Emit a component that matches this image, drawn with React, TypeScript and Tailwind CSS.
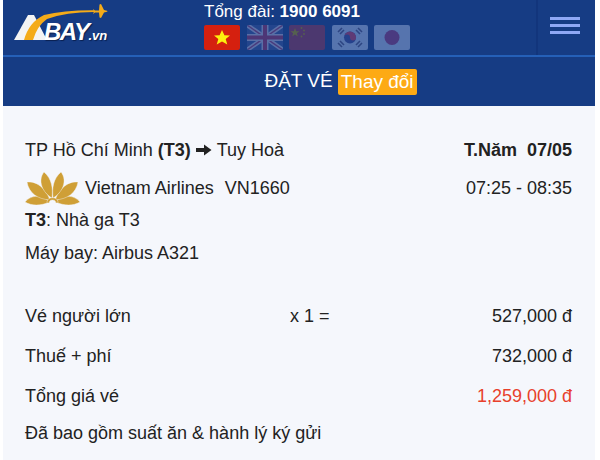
const flagBase = 'h-[25px] w-[36px] overflow-hidden rounded-[2px]';

const VietnamFlag = () => (
  <svg viewBox="0 0 36 25" className={flagBase}>
    <rect width="36" height="25" fill="#d5200f" />
    <polygon points="18,5 20.4,10.3 26,10.4 21.7,14 23.3,19.6 18,16.4 12.7,19.6 14.3,14 10,10.4 15.6,10.3" fill="#fdf00e" />
  </svg>
);

const UkFlag = () => (
  <svg viewBox="0 0 36 25" className={flagBase}>
    <rect width="36" height="25" fill="#23458d" />
    <path d="M0 0L36 25M36 0L0 25" stroke="#5a6fa6" strokeWidth="4.5" />
    <path d="M0 0L36 25M36 0L0 25" stroke="#4a3a7c" strokeWidth="1.4" />
    <path d="M18 0V25M0 12.5H36" stroke="#5a6fa6" strokeWidth="7" />
    <path d="M18 0V25M0 12.5H36" stroke="#4d3676" strokeWidth="4" />
  </svg>
);

const ChinaFlag = () => (
  <svg viewBox="0 0 36 25" className={flagBase}>
    <rect width="36" height="25" fill="#4c386f" />
    <polygon points="6,3 7.2,6.2 10.5,6.2 7.9,8.3 8.8,11.5 6,9.6 3.2,11.5 4.1,8.3 1.5,6.2 4.8,6.2" fill="#55604f" />
    <circle cx="12.5" cy="3" r="0.9" fill="#55604f" />
    <circle cx="15" cy="5.5" r="0.9" fill="#55604f" />
    <circle cx="15" cy="9" r="0.9" fill="#55604f" />
    <circle cx="12.5" cy="11.5" r="0.9" fill="#55604f" />
  </svg>
);

const KoreaFlag = () => (
  <svg viewBox="0 0 36 25" className={flagBase}>
    <rect width="36" height="25" fill="#5674ae" />
    <circle cx="18" cy="12.5" r="6" fill="#25418c" />
    <path d="M12 12.5a6 6 0 0 1 12 0a3 3 0 0 1-6 0a3 3 0 0 0-6 0z" fill="#5f3a75" />
    <path d="M6 7l4-4M8 9l4-4M26 3l4 4M24 5l4 4M6 18l4 4M8 16l4 4M26 22l4-4M24 20l4-4" stroke="#2d4582" strokeWidth="1.6" />
  </svg>
);

const JapanFlag = () => (
  <svg viewBox="0 0 36 25" className={flagBase}>
    <rect width="36" height="25" fill="#5674ae" />
    <circle cx="18" cy="12.5" r="7.5" fill="#4a3a80" />
  </svg>
);

// logo box starts at x=14, y=4 on the page
const Logo = () => (
  <div className="relative h-[40px] w-[96px]">
    <svg viewBox="0 0 96 40" className="absolute inset-0 h-full w-full">
      <polygon points="0,36 14,11 20,11 33,36" fill="#f4f4f4" />
      <path d="M10 36Q15 18 30 11Q50 6 80 6.2L80 8Q52 8 33 15Q23 22 19 36Z" fill="#f4ab19" />
      <path d="M79 5L81 6.5L85 6.5L85.5 0.5L87 0L90 6L93 6.8Q94 7.2 93 7.8L90 8.5L87 14L85.5 13.5L85 8.5L81 8.5L79 10L80 7.5Z" fill="#f4ab19" />
    </svg>
    <div className="absolute top-[15px] left-[30px] flex items-baseline font-['Liberation_Sans',sans-serif] text-white italic [text-shadow:1px_1px_1px_#0a2050]">
      <span className="text-[24px] leading-[26px] font-bold tracking-[-1.5px]">BAY</span>
      <span className="text-[13px] leading-[14px] font-bold">.vn</span>
    </div>
  </div>
);

const LotusLogo = () => (
  <svg viewBox="0 0 55 34" className="h-[34px] w-[55px]">
    <g fill="#cf9f36" stroke="#f5f7fc" strokeWidth="0.4">
      <path d="M0 31C7 23 17 24 25 31C15 35 7 35 0 31Z" />
      <path d="M55 31C48 23 38 24 30 31C40 35 48 35 55 31Z" />
      <path d="M2 11C11 10 20 16 25 29C12 28 4 22 2 11Z" />
      <path d="M53 11C44 10 35 16 30 29C43 28 51 22 53 11Z" />
      <path d="M19 1C27 8 28 17 27 27C18 22 12 10 19 1Z" />
      <path d="M36 1C28 8 27 17 28 27C37 22 43 10 36 1Z" />
      <path d="M22 32C21 25 34 25 33 32L31 32C31 28 24 28 24 32Z" />
    </g>
  </svg>
);

const prices = [
  { label: 'Vé người lớn', middle: 'x 1 =', value: '527,000 đ', valueClass: 'text-[#222222]' },
  { label: 'Thuế + phí', middle: '', value: '732,000 đ', valueClass: 'text-[#222222]' },
  { label: 'Tổng giá vé', middle: '', value: '1,259,000 đ', valueClass: 'text-[#e8402b]' },
];

export default function App() {
  return (
    <div className="h-[460px] w-[600px] overflow-hidden bg-white font-['Liberation_Sans',Arial,sans-serif] text-[18px] text-[#222222]">
      <div className="mr-[5px] ml-[3px] h-[460px] bg-[#f5f7fc]">
        <header className="flex h-[106px] flex-col bg-[#163c84]">
          <div className="flex h-[57px] border-b-2 border-[#2560b8]">
            <div className="w-[201px] pt-[4px] pl-[11px]">
              <Logo />
            </div>
            <div className="flex w-[332px] flex-col items-start">
              <div className="pt-[1px] text-[17px] leading-[22px] text-white">
                Tổng đài: <b>1900 6091</b>
              </div>
              <div className="mt-[2px] flex gap-[6.5px]">
                <VietnamFlag />
                <UkFlag />
                <ChinaFlag />
                <KoreaFlag />
                <JapanFlag />
              </div>
            </div>
            <div className="flex flex-1 flex-col items-center gap-[4px] border-l-2 border-[#12357c] pt-[17px] pr-[3px]">
              <span className="h-[3px] w-[30px] bg-[#8fa8f5]" />
              <span className="h-[3px] w-[30px] bg-[#8fa8f5]" />
              <span className="h-[3px] w-[30px] bg-[#8fa8f5]" />
            </div>
          </div>
          <div className="flex flex-1 items-center justify-center gap-[5px] pl-[83px] text-[19px] text-white">
            <span>ĐẶT VÉ</span>
            <span className="rounded-[2px] bg-[#fdaa14] px-[3px] leading-[26px]">Thay đổi</span>
          </div>
        </header>

        <main className="pr-[23px] pl-[22px]">
          <div className="flex justify-between pt-[32px] leading-[24px]">
            <div className="flex items-center">
              <span>
                TP Hồ Chí Minh <b>(T3)</b>
              </span>
              <svg viewBox="0 0 16 14" className="mx-[5px] h-[14px] w-[16px]">
                <path d="M0 5H8V1.5L15.5 7L8 12.5V9H0Z" fill="#222222" />
              </svg>
              <span>Tuy Hoà</span>
            </div>
            <b>T.Năm&nbsp; 07/05</b>
          </div>
          <div className="mt-[9px] flex items-center justify-between">
            <div className="flex items-center gap-[5px]">
              <LotusLogo />
              <div className="flex gap-[11px]">
                <span>Vietnam Airlines</span>
                <span>VN1660</span>
              </div>
            </div>
            <span>07:25 - 08:35</span>
          </div>
          <div className="mt-[3px] leading-[24px]">
            <b>T3</b>: Nhà ga T3
          </div>
          <div className="mt-[9px] leading-[24px]">Máy bay: Airbus A321</div>

          <div className="mt-[31px] flex flex-col">
            {prices.map((row) => (
              <div key={row.label} className="grid h-[40px] grid-cols-[265px_1fr_auto] items-center">
                <span>{row.label}</span>
                <span>{row.middle}</span>
                <span className={row.valueClass}>{row.value}</span>
              </div>
            ))}
          </div>
          <div className="mt-[5px] leading-[24px]">Đã bao gồm suất ăn &amp; hành lý ký gửi</div>
        </main>
      </div>
    </div>
  );
}
